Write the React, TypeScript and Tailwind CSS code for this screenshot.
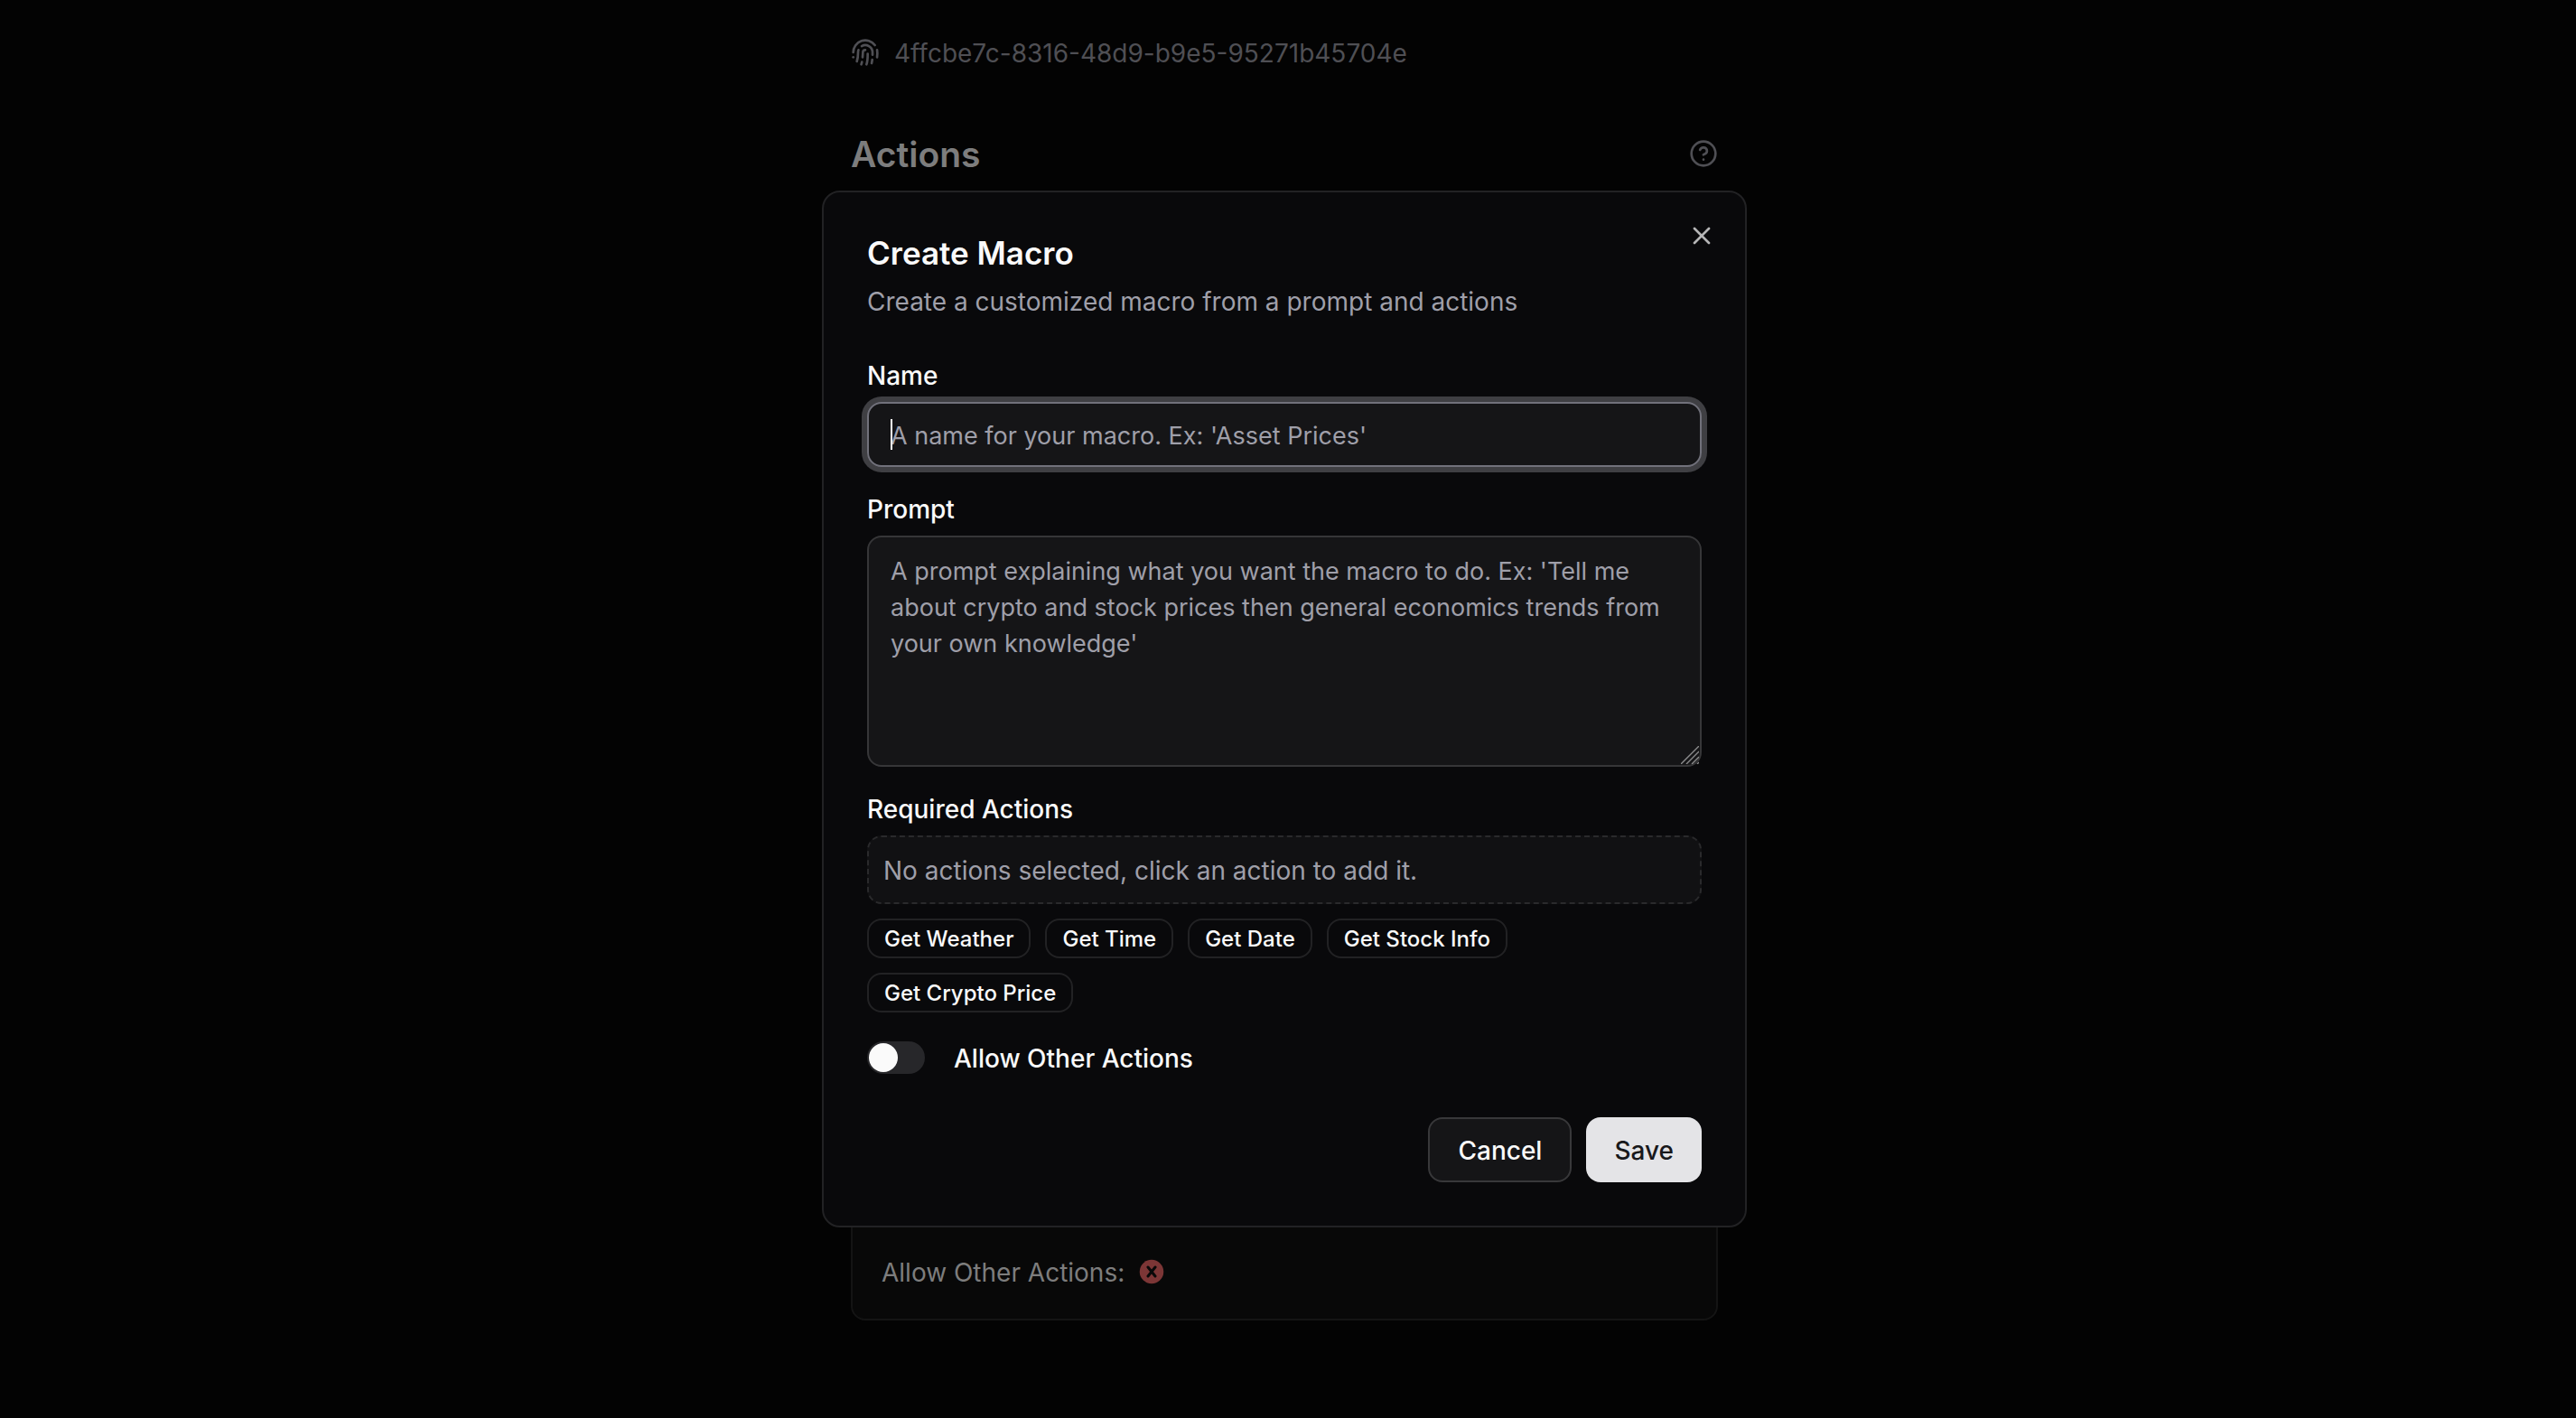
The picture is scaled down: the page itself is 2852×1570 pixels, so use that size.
import { CircleHelp, Fingerprint, X } from "lucide-react";

const actions = ["Get Weather", "Get Time", "Get Date", "Get Stock Info", "Get Crypto Price"];

function PageBehind() {
  return (
    <main className="mx-auto flex h-full w-full max-w-[960px] flex-col pt-9 pb-[108px]">
      <div className="flex items-center gap-4 text-[#4f4f54]">
        <Fingerprint className="size-8" />
        <p className="pt-0.5 text-[28px] leading-[42px]">4ffcbe7c-8316-48d9-b9e5-95271b45704e</p>
      </div>
      <div className="mt-[62px] flex items-center justify-between">
        <h1 className="pt-0.5 text-[39px] leading-[54px] font-semibold text-[#7d7d7d]">Actions</h1>
        <button type="button" aria-label="Help" className="text-[#4f4f54]">
          <CircleHelp className="size-8" />
        </button>
      </div>
      <section className="mt-12 flex flex-1 flex-col justify-end rounded-2xl border-2 border-[#141414] bg-[#080808] p-8">
        <div className="flex items-center gap-4">
          <p className="pt-0.5 text-[28px] leading-[38px] text-[#7d7d7d]">Allow Other Actions:</p>
          <svg viewBox="0 0 28 28" className="size-7" aria-label="Not allowed">
            <circle cx="14" cy="14" r="13.25" fill="#7c3636" />
            <path d="M10 9 18 19M18 9 10 19" stroke="#080808" strokeWidth="3" strokeLinecap="round" />
          </svg>
        </div>
      </section>
    </main>
  );
}

function CreateMacroDialog() {
  return (
    <form
      role="dialog"
      aria-labelledby="dialog-title"
      className="relative flex w-full max-w-[1024px] flex-col gap-12 rounded-[20px] border-2 border-[#222224] bg-[#09090b] p-12 text-[#fafafa]"
    >
      <header className="flex flex-col gap-4">
        <h2 id="dialog-title" className="text-[35px] leading-[38px] font-semibold">Create Macro</h2>
        <p className="text-[28px] leading-[38px] text-[#9f9fa9]">Create a customized macro from a prompt and actions</p>
      </header>
      <button type="button" aria-label="Close" className="absolute top-8 right-8 text-[#b5b5b6]">
        <X className="size-8" />
      </button>
      <div className="flex flex-col gap-8">
        <div className="flex flex-col gap-[14px]">
          <label htmlFor="name" className="text-[28px] leading-[30px] font-medium">Name</label>
          <div className="relative flex">
            <input
              id="name"
              autoFocus
              placeholder="A name for your macro. Ex: 'Asset Prices'"
              className="h-[72px] w-full rounded-2xl border-2 border-[#71717b] bg-[#151517] px-6 pt-0.5 text-[27px] caret-transparent ring-6 ring-[#3f3f43] outline-none placeholder:text-[#9f9fa9]"
            />
            <span aria-hidden="true" className="absolute inset-y-[19px] left-[26px] w-0.5 bg-white" />
          </div>
        </div>
        <div className="flex flex-col gap-[14px]">
          <label htmlFor="prompt" className="text-[28px] leading-[30px] font-medium">Prompt</label>
          <div className="relative flex">
            <textarea
              id="prompt"
              placeholder="A prompt explaining what you want the macro to do. Ex: 'Tell me about crypto and stock prices then general economics trends from your own knowledge'"
              className="h-64 w-full resize-none rounded-2xl border-2 border-[#363638] bg-[#151517] px-6 pt-[18px] pb-4 text-[27px] leading-10 outline-none placeholder:text-[#9f9fa9]"
            />
            <svg viewBox="0 0 20 20" aria-hidden="true" className="pointer-events-none absolute right-[3px] bottom-[3px] size-5">
              <path d="M0 20 20 0M6 20 20 6M12 20 20 12M18 20 20 18" stroke="#8c8c8d" strokeWidth="1.4" />
            </svg>
          </div>
        </div>
        <div className="flex flex-col gap-4">
          <div className="flex flex-col gap-[14px]">
            <h3 className="text-[28px] leading-[30px] font-medium">Required Actions</h3>
            <p className="rounded-2xl border-2 border-dashed border-[#2a2a2c] bg-[#111113] px-4 pt-[18px] pb-4 text-[28px] leading-[38px] text-[#9f9fa9]">
              No actions selected, click an action to add it.
            </p>
          </div>
          <div className="flex max-w-[800px] flex-wrap gap-4">
            {actions.map((action) => (
              <button
                key={action}
                type="button"
                className="h-11 rounded-2xl border-2 border-[#222224] px-[17px] pt-0.5 text-2xl leading-8 font-medium"
              >
                {action}
              </button>
            ))}
          </div>
        </div>
        <div className="flex items-center gap-8">
          <input
            id="allow-other"
            type="checkbox"
            role="switch"
            className="flex h-9 w-16 appearance-none items-center rounded-full bg-[#27272a] p-0.5 before:size-8 before:rounded-full before:bg-[#fafafa] checked:justify-end"
          />
          <label htmlFor="allow-other" className="pt-0.5 text-[28px] leading-7 font-medium">Allow Other Actions</label>
        </div>
      </div>
      <footer className="flex justify-end gap-4">
        <button type="button" className="h-[72px] rounded-2xl border-2 border-[#38383a] bg-[#151517] px-[31px] pt-0.5 text-[28px] font-medium">
          Cancel
        </button>
        <button type="submit" className="h-[72px] rounded-2xl bg-[#e4e4e7] px-[31px] pt-0.5 text-[28px] font-medium text-[#18181b]">
          Save
        </button>
      </footer>
    </form>
  );
}

export default function App() {
  return (
    <div className="relative h-screen overflow-hidden bg-[#030303] pr-2 font-['Inter',sans-serif]">
      <PageBehind />
      <div className="absolute inset-0 flex items-center justify-center pr-2">
        <CreateMacroDialog />
      </div>
    </div>
  );
}
